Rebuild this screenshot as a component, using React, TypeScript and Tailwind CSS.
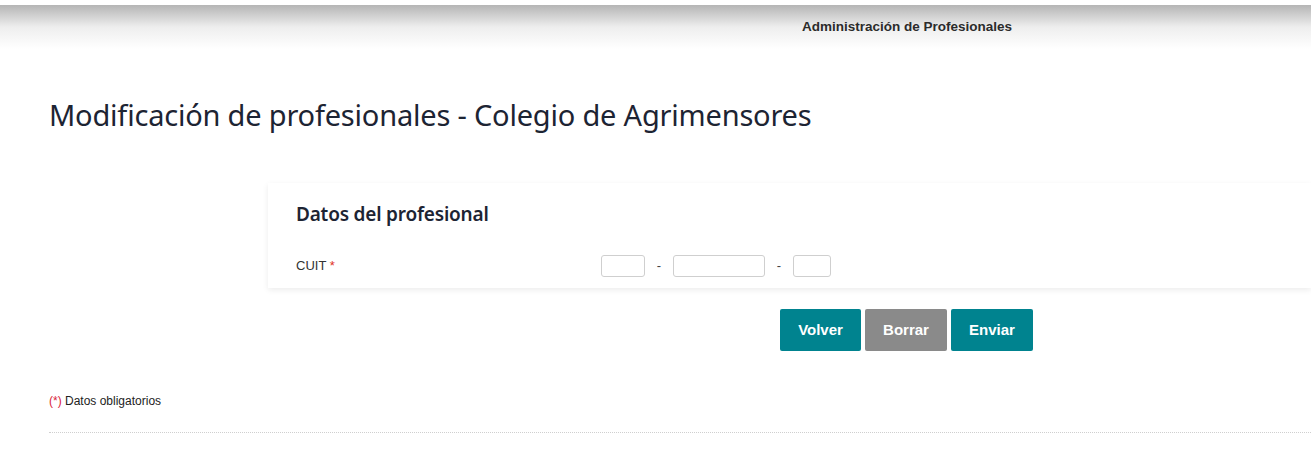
import React from "react";

const arial = { fontFamily: '"Liberation Sans", Arial, sans-serif' };

const Header = () => (
  <div className="w-full pt-[5px]">
    <div className="h-[44px] bg-gradient-to-b from-[#b5b5b5] via-[#eeeeee] to-white flex items-start">
      <p
        style={arial}
        className="ml-[802px] mt-[14px] text-[13.5px] font-bold text-[#2b2b2b] leading-[16px]"
      >
        Administración de Profesionales
      </p>
    </div>
  </div>
);

const CuitInputs = () => (
  <div className="flex items-center" style={arial}>
    <input className="w-[44px] h-[22px] border border-[#cfcfcf] rounded-[3px]" />
    <span className="w-[28px] text-center text-[13px] text-[#444]">-</span>
    <input className="w-[92px] h-[22px] border border-[#cfcfcf] rounded-[3px]" />
    <span className="w-[28px] text-center text-[13px] text-[#444]">-</span>
    <input className="w-[38px] h-[22px] border border-[#cfcfcf] rounded-[3px]" />
  </div>
);

const App = () => {
  return (
    <div className="w-[1311px] min-h-[463px] bg-white overflow-hidden">
      <Header />
      <h1
        style={{ fontFamily: '"Noto Sans", sans-serif' }}
        className="ml-[49px] mt-[46px] text-[29px] leading-[40px] text-[#1d2433] tracking-[-0.2px]"
      >
        Modificación de profesionales - Colegio de Agrimensores
      </h1>

      <div className="ml-[268px] mt-[48px] bg-white shadow-[0_2px_6px_rgba(0,0,0,0.08)] pl-[28px] pt-[17px] pb-[11px]">
        <h2
          style={{ fontFamily: '"Noto Sans", sans-serif' }}
          className="text-[19px] font-semibold text-[#1d2433] leading-[28px] tracking-[-0.2px]"
        >
          Datos del profesional
        </h2>
        <div className="flex items-center mt-[27px]">
          <p style={arial} className="w-[305px] text-[13px] text-[#333]">
            CUIT <span className="text-[#e0301e]">*</span>
          </p>
          <CuitInputs />
        </div>
      </div>

      <div className="flex gap-[4px] ml-[780px] mt-[21px]" style={arial}>
        <button className="w-[81px] h-[42px] bg-[#00838f] text-white font-bold text-[15px] rounded-[2px]">
          Volver
        </button>
        <button className="w-[82px] h-[42px] bg-[#8a8a8a] text-white font-bold text-[15px] rounded-[2px]">
          Borrar
        </button>
        <button className="w-[82px] h-[42px] bg-[#00838f] text-white font-bold text-[15px] rounded-[2px]">
          Enviar
        </button>
      </div>

      <p style={arial} className="ml-[49px] mt-[41px] text-[12px] text-[#222]">
        <span className="text-[#d9233a]">(*)</span> Datos obligatorios
      </p>
      <div className="ml-[49px] mt-[22px] border-t border-dotted border-[#cfcfcf]" />
    </div>
  );
};

export default App;
